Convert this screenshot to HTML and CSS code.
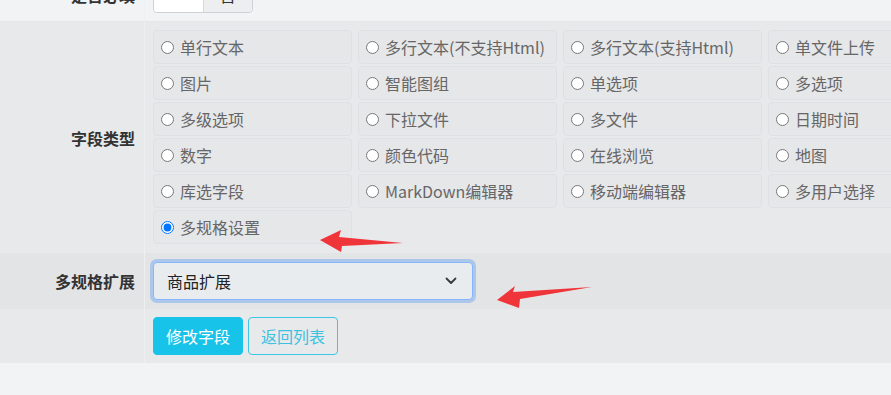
FILE: index.html
```html
<!DOCTYPE html>
<html lang="zh-CN">
<head>
    <meta charset="UTF-8">
    <title>修改字段</title>
    <link rel="stylesheet" href="styles.css">
</head>
<body>
    <div class="form-page">
        <div class="form-row row-top">
            <div class="form-label">是否必填</div>
            <div class="form-field">
                <div class="toggle-group">
                    <span class="toggle-item"></span>
                    <span class="toggle-item off">否</span>
                </div>
            </div>
        </div>

        <div class="form-row row-type">
            <div class="form-label">字段类型</div>
            <div class="form-field">
                <div class="type-grid">
                    <label class="type-item"><input type="radio" name="type"><span>单行文本</span></label>
                    <label class="type-item"><input type="radio" name="type"><span>多行文本(不支持Html)</span></label>
                    <label class="type-item"><input type="radio" name="type"><span>多行文本(支持Html)</span></label>
                    <label class="type-item"><input type="radio" name="type"><span>单文件上传</span></label>
                    <label class="type-item"><input type="radio" name="type"><span>图片</span></label>
                    <label class="type-item"><input type="radio" name="type"><span>智能图组</span></label>
                    <label class="type-item"><input type="radio" name="type"><span>单选项</span></label>
                    <label class="type-item"><input type="radio" name="type"><span>多选项</span></label>
                    <label class="type-item"><input type="radio" name="type"><span>多级选项</span></label>
                    <label class="type-item"><input type="radio" name="type"><span>下拉文件</span></label>
                    <label class="type-item"><input type="radio" name="type"><span>多文件</span></label>
                    <label class="type-item"><input type="radio" name="type"><span>日期时间</span></label>
                    <label class="type-item"><input type="radio" name="type"><span>数字</span></label>
                    <label class="type-item"><input type="radio" name="type"><span>颜色代码</span></label>
                    <label class="type-item"><input type="radio" name="type"><span>在线浏览</span></label>
                    <label class="type-item"><input type="radio" name="type"><span>地图</span></label>
                    <label class="type-item"><input type="radio" name="type"><span>库选字段</span></label>
                    <label class="type-item"><input type="radio" name="type"><span>MarkDown编辑器</span></label>
                    <label class="type-item"><input type="radio" name="type"><span>移动端编辑器</span></label>
                    <label class="type-item"><input type="radio" name="type"><span>多用户选择</span></label>
                    <label class="type-item"><input type="radio" name="type" checked><span>多规格设置</span></label>
                </div>
            </div>
        </div>

        <div class="form-row row-spec">
            <div class="form-label">多规格扩展</div>
            <div class="form-field">
                <div class="select-box">
                    <span>商品扩展</span>
                    <svg class="chevron" width="12" height="8" viewBox="0 0 12 8">
                        <path d="M1.5 1.5 L6 6 L10.5 1.5" fill="none" stroke="#343a40" stroke-width="1.8" stroke-linecap="round" stroke-linejoin="round"/>
                    </svg>
                </div>
            </div>
        </div>

        <div class="form-row row-actions">
            <div class="form-label"></div>
            <div class="form-field actions">
                <button class="btn btn-info">修改字段</button>
                <button class="btn btn-outline">返回列表</button>
            </div>
        </div>
    </div>

    <!-- annotation arrows -->
    <svg class="marks" width="891" height="395" viewBox="0 0 891 395">
        <polygon points="320,240 341,230 339,237 403,243 342,246 341,252" fill="#f0353a"/>
        <polygon points="497,300 515,286 513,292 592,287 520,299 519,308" fill="#f0353a"/>
    </svg>
</body>
</html>
```

FILE: styles.css
```css
/* Base styles */
* {
    margin: 0;
    padding: 0;
    box-sizing: border-box;
}

body {
    font-family: "Noto Sans CJK SC", "Noto Sans", sans-serif;
    font-size: 16px;
    color: #333;
    background-color: #f2f3f5;
    width: 891px;
    height: 395px;
    overflow: hidden;
    position: relative;
}

/* Form layout - page is scrolled a little, so the first row is cut */
.form-page {
    margin-top: -31px;
}

.form-row {
    display: flex;
    border-bottom: 1px solid #e2e3e6;
}

.form-label {
    width: 145px;
    flex-shrink: 0;
    padding-right: 9px;
    display: flex;
    align-items: center;
    justify-content: flex-end;
    font-weight: bold;
    color: #333;
    border-right: 1px solid #eeeff1;
}

.form-field {
    flex: 1;
    padding: 8px;
}

.row-top {
    background-color: #f2f3f5;
    border-bottom-color: #e6e7e9;
}

.row-type {
    background-color: #e8e9eb;
    border-bottom: none;
}

.row-type .form-field {
    padding: 8px 8px 9px;
}

.row-spec {
    background-color: #e3e4e6;
    border-bottom: none;
}

.row-spec .form-field {
    padding: 9px 8px;
}

.row-actions {
    background-color: #e8e9eb;
    border-bottom: none;
}

/* Required toggle */
.toggle-group {
    display: flex;
    width: 100px;
    height: 36px;
    border: 1px solid #cfd1d4;
    border-radius: 4px;
    overflow: hidden;
}

.toggle-item {
    flex: 1;
    background-color: #fff;
    display: flex;
    align-items: center;
    justify-content: center;
}

.toggle-item.off {
    background-color: #eceef0;
    border-left: 1px solid #d6d8db;
}

/* Field type grid */
.type-grid {
    display: grid;
    grid-template-columns: repeat(4, 199px);
    column-gap: 6px;
    row-gap: 2px;
}

.type-item {
    height: 34px;
    display: flex;
    align-items: center;
    padding: 0 7px;
    background-color: #e6e7e9;
    border: 1px solid #dfe0e3;
    border-radius: 4px;
    color: #666;
    white-space: nowrap;
}

.type-item input {
    width: 13px;
    height: 13px;
    margin: 0 6px 0 0;
    flex-shrink: 0;
}

/* Select */
.select-box {
    width: 320px;
    height: 38px;
    display: flex;
    align-items: center;
    justify-content: space-between;
    padding: 0 15px 0 13px;
    background-color: #e9ecef;
    border: 1px solid #86b7fe;
    border-radius: 4px;
    box-shadow: 0 0 0 3px rgba(13, 110, 253, 0.25);
    color: #222;
}

/* Buttons */
.actions {
    display: flex;
    gap: 5px;
}

.btn {
    width: 90px;
    height: 38px;
    border-radius: 4px;
    font-family: inherit;
    font-size: 16px;
    cursor: pointer;
}

.btn-info {
    background-color: #17c3e9;
    border: 1px solid #17c3e9;
    color: #fff;
}

.btn-outline {
    background-color: transparent;
    border: 1px solid #3cc6e6;
    color: #3cc1e0;
}

/* Annotation overlay */
.marks {
    position: absolute;
    top: 0;
    left: 0;
    pointer-events: none;
}
```
